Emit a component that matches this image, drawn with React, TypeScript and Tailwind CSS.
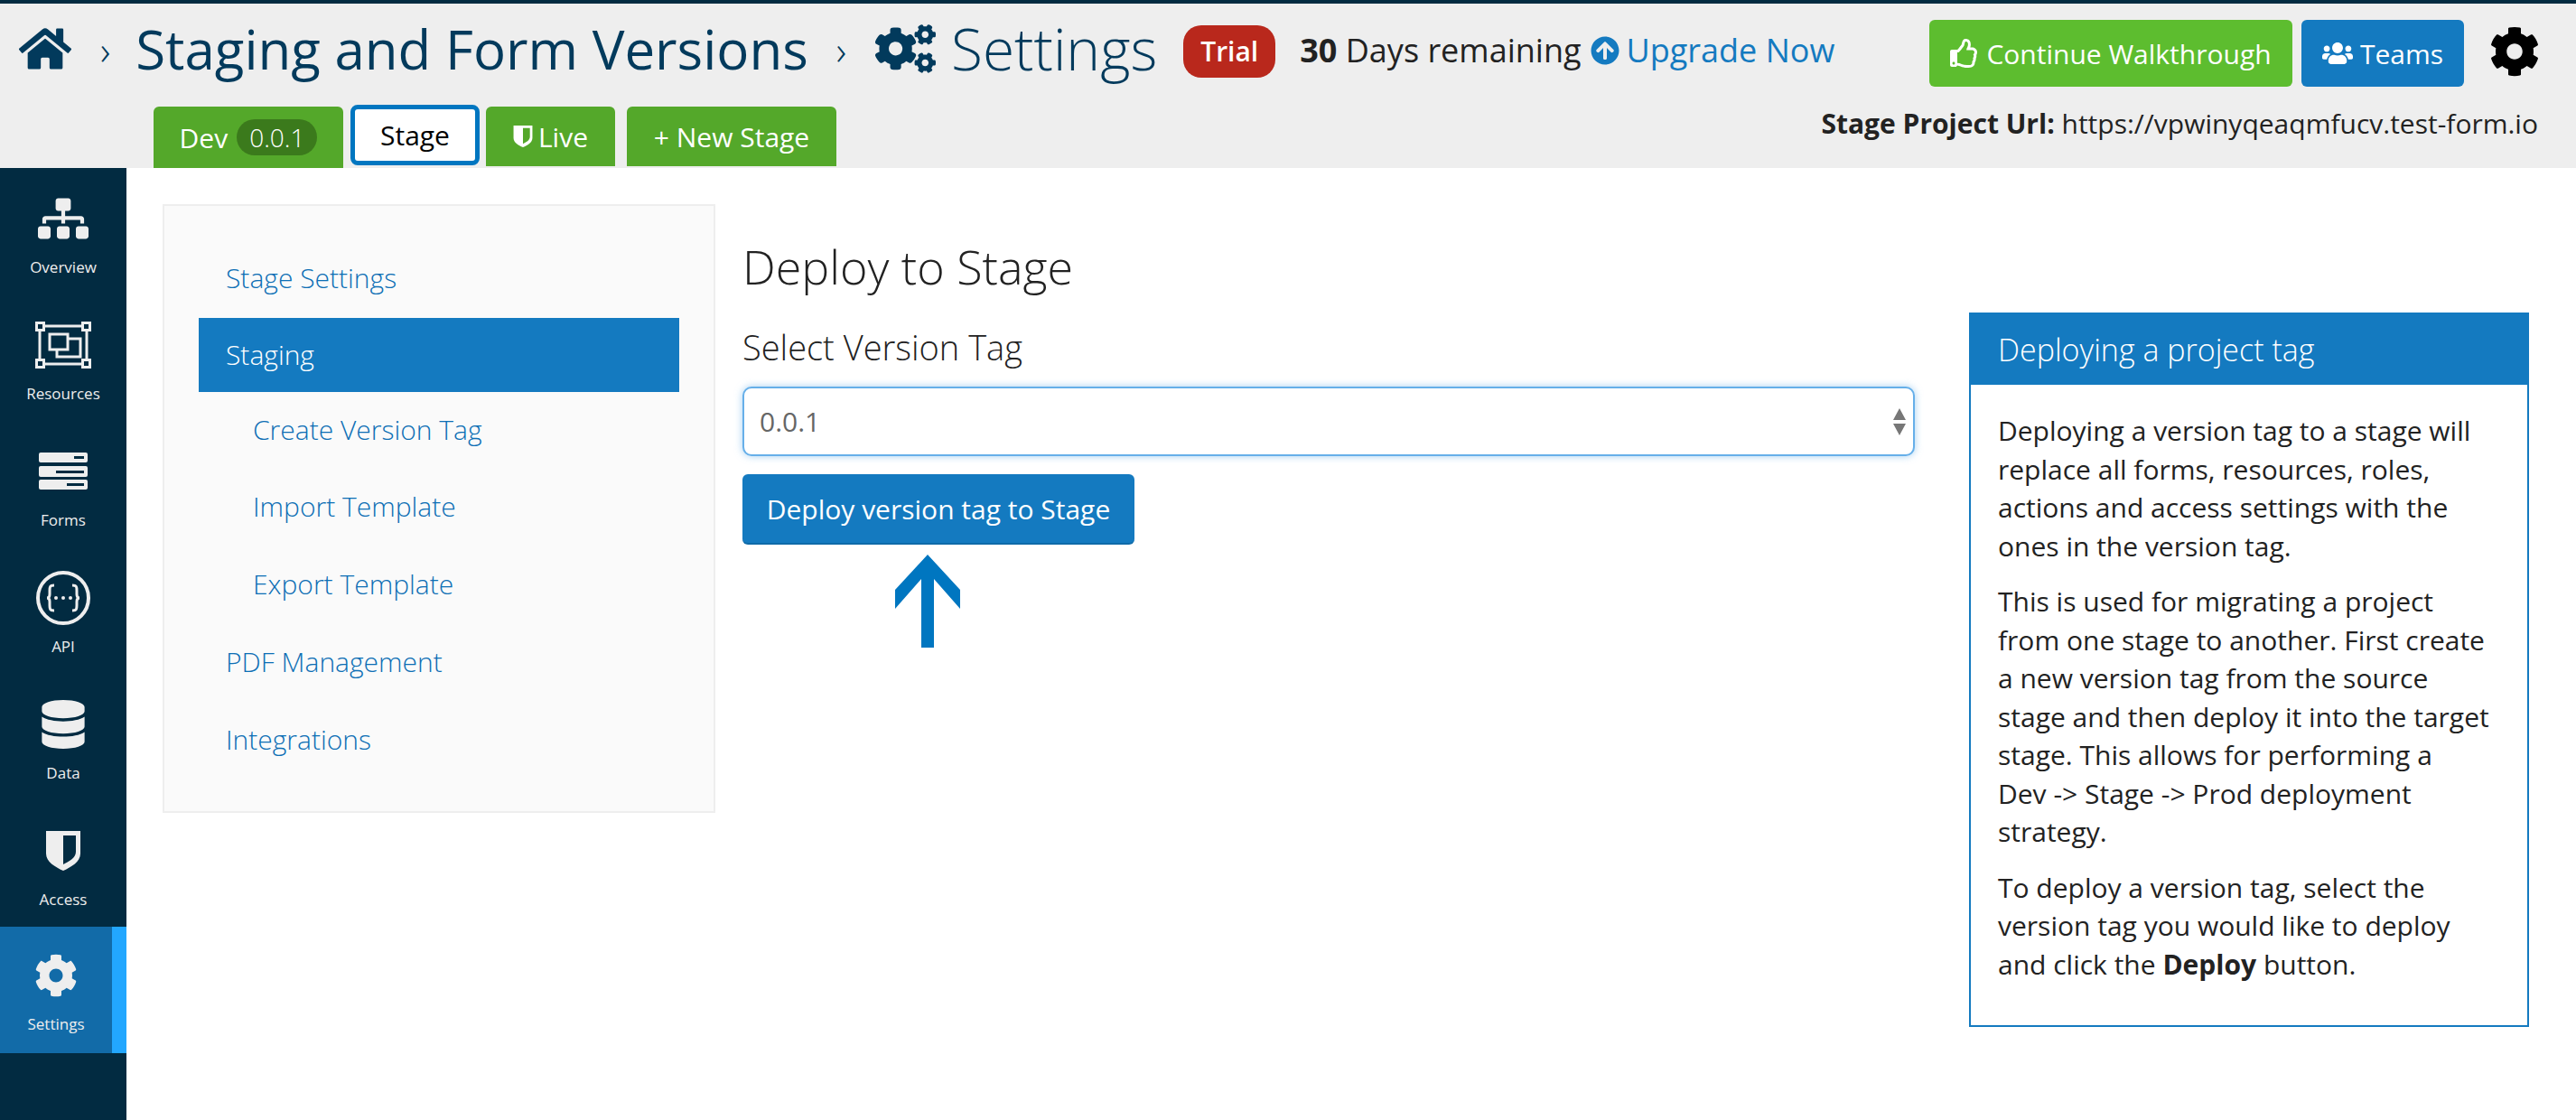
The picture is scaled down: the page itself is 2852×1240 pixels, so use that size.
import React from "react";
import { FaHome, FaCogs, FaCog, FaUsers, FaRegThumbsUp, FaArrowCircleUp, FaSitemap, FaDatabase } from "react-icons/fa";

const Shield = ({ className }: { className?: string }) => (
  <svg viewBox="0 0 40 46" className={className} fill="currentColor">
    <path fillRule="evenodd" d="M1 1h38v25c0 9-10 15-19 19C11 41 1 35 1 26V1zM20 6v32c6-3 14-7 14-14V6H20z" />
  </svg>
);

const ResourcesIcon = () => (
  <svg viewBox="0 0 62 52" className="w-[62px] h-[52px]" fill="none" stroke="#eeeeee" strokeWidth="3">
    <path d="M9 5h44M9 47h44M5 9v34M57 9v34" />
    <rect x="1.5" y="1.5" width="8" height="8" strokeWidth="3" />
    <rect x="52.5" y="1.5" width="8" height="8" strokeWidth="3" />
    <rect x="1.5" y="42.5" width="8" height="8" strokeWidth="3" />
    <rect x="52.5" y="42.5" width="8" height="8" strokeWidth="3" />
    <rect x="16" y="14" width="20" height="17" />
    <path d="M36 19h14v20H24v-8" />
  </svg>
);

const FormsIcon = () => (
  <svg viewBox="0 0 54 42" className="w-[54px] h-[42px]">
    <rect x="0" y="0" width="54" height="11" rx="2" fill="#eeeeee" />
    <rect x="0" y="15" width="54" height="12" rx="2" fill="#eeeeee" />
    <rect x="0" y="30" width="54" height="11" rx="2" fill="#eeeeee" />
    <rect x="39" y="4" width="11" height="3" fill="#022b41" />
    <rect x="19" y="20" width="31" height="3" fill="#022b41" />
    <rect x="31" y="34" width="19" height="3" fill="#022b41" />
  </svg>
);

const ApiIcon = () => (
  <svg viewBox="0 0 60 60" className="w-[60px] h-[60px]" fill="none" stroke="#eeeeee">
    <circle cx="30" cy="30" r="28" strokeWidth="4" />
    <path d="M20 16c-5 0-5 2-5 6v4c0 3-1 4-3 4 2 0 3 1 3 4v4c0 4 0 6 5 6M40 16c5 0 5 2 5 6v4c0 3 1 4 3 4-2 0-3 1-3 4v4c0 4 0 6-5 6" strokeWidth="3" />
    <circle cx="22" cy="30" r="2" fill="#eeeeee" stroke="none" />
    <circle cx="30" cy="30" r="2" fill="#eeeeee" stroke="none" />
    <circle cx="38" cy="30" r="2" fill="#eeeeee" stroke="none" />
  </svg>
);

const SideItem = ({ icon, label, active }: { icon: React.ReactNode; label: string; active?: boolean }) => (
  <div className={active ? "h-[140px] -mt-[26px] flex bg-[#126ba8]" : "h-[140px] flex"}>
    <div className={active ? "w-[124px] flex flex-col items-center pt-[24px]" : "w-[140px] flex flex-col items-center"}>
      <div className="h-[60px] flex items-center justify-center">{icon}</div>
      <div className="mt-[12px] text-[17px] leading-[24px] text-[#eeeeee] font-medium">{label}</div>
    </div>
    {active && <div className="w-[16px] bg-[#22a7ff]" />}
  </div>
);

export default function App() {
  return (
    <div className="w-[2852px] h-[1240px] overflow-hidden bg-white flex flex-col font-['Open_Sans',sans-serif] text-[#222222]">
      <div className="h-[4px] bg-[#022b41]" />
      <header className="h-[182px] bg-[#eeeeee] flex flex-col">
        <div className="h-[112px] flex items-start pl-[21px] pr-[40px] pt-[13px]">
          <FaHome className="w-[58px] h-[52px] mt-[11px] text-[#023a5c]" />
          <span className="ml-[32px] mt-[12px] text-[44px] leading-[52px] text-[#023a5c] font-light">›</span>
          <h1 className="ml-[28px] text-[60px] leading-[74px] text-[#023a5c] font-normal whitespace-nowrap">Staging and Form Versions</h1>
          <span className="ml-[31px] mt-[12px] text-[44px] leading-[52px] text-[#023a5c] font-light">›</span>
          <FaCogs className="ml-[32px] mt-[7px] w-[67px] h-[60px] text-[#023a5c]" />
          <h2 className="ml-[17px] text-[64px] leading-[74px] text-[#023a5c] font-light whitespace-nowrap">Settings</h2>
          <span className="ml-[29px] mt-[11px] w-[102px] h-[58px] rounded-[20px] bg-[#b9281c] text-white text-[30px] leading-[58px] text-center font-semibold">Trial</span>
          <span className="ml-[27px] mt-[14px] text-[36px] leading-[50px] whitespace-nowrap"><b>30</b> Days remaining</span>
          <span className="ml-[10px] mt-[14px] flex items-center text-[36px] leading-[50px] text-[#147ac0] whitespace-nowrap">
            <FaArrowCircleUp className="w-[32px] h-[32px] mr-[8px]" />Upgrade Now
          </span>
          <div className="flex-1" />
          <button className="w-[402px] h-[74px] mt-[5px] rounded-[6px] bg-[#5dbd2f] text-white text-[30px] flex items-center justify-center gap-[8px]"><FaRegThumbsUp className="w-[32px] h-[32px]" />Continue Walkthrough</button>
          <button className="ml-[10px] mt-[5px] w-[180px] h-[74px] rounded-[6px] bg-[#147ac0] text-white text-[30px] flex items-center justify-center gap-[8px]"><FaUsers className="w-[34px] h-[34px]" />Teams</button>
          <FaCog className="ml-[28px] mt-[12px] w-[56px] h-[56px] text-black" />
        </div>
        <div className="h-[70px] flex items-end pl-[170px] pr-[42px]">
          <div className="w-[210px] h-[68px] rounded-t-[6px] bg-[#54a82a] text-white text-[30px] flex items-center justify-center gap-[10px]">Dev<span className="px-[14px] h-[40px] rounded-[20px] bg-[#3b7a1c] text-[28px] leading-[40px] font-light">0.0.1</span></div>
          <div className="ml-[8px] w-[143px] h-[67px] mb-[3px] rounded-[8px] border-[5px] border-[#0076c0] bg-white text-black text-[30px] flex items-center justify-center">Stage</div>
          <div className="ml-[7px] w-[143px] h-[66px] mb-[2px] rounded-t-[6px] bg-[#54a82a] text-white text-[30px] flex items-center justify-center gap-[6px]"><Shield className="w-[22px] h-[28px]" />Live</div>
          <div className="ml-[13px] w-[232px] h-[66px] mb-[2px] rounded-t-[6px] bg-[#54a82a] text-white text-[30px] flex items-center justify-center">+ New Stage</div>
          <div className="flex-1" />
          <div className="h-[70px] text-[30px] leading-[42px] whitespace-nowrap"><b>Stage Project Url:</b> https://vpwinyqeaqmfucv.test-form.io</div>
        </div>
      </header>
      <div className="flex-1 flex">
        <aside className="w-[140px] bg-[#022b41] flex flex-col pt-[26px]">
          <SideItem icon={<FaSitemap className="w-[56px] h-[46px] text-[#eeeeee]" />} label="Overview" />
          <SideItem icon={<ResourcesIcon />} label="Resources" />
          <SideItem icon={<FormsIcon />} label="Forms" />
          <SideItem icon={<ApiIcon />} label="API" />
          <SideItem icon={<FaDatabase className="w-[48px] h-[54px] text-[#eeeeee]" />} label="Data" />
          <SideItem icon={<Shield className="w-[40px] h-[46px] text-[#eeeeee]" />} label="Access" />
          <SideItem active icon={<FaCog className="w-[48px] h-[48px] text-[#eeeeee]" />} label="Settings" />
        </aside>
        <main className="flex-1 flex items-start pl-[40px] pr-[52px] pt-[40px]">
          <nav className="w-[612px] h-[674px] border-2 border-[#eeeeee] bg-[#fafafa] pt-[38px] px-[38px] text-[30px] font-light text-[#0d6fb5] shrink-0">
            <div className="h-[86px] leading-[84px] pl-[30px]">Stage Settings</div>
            <div className="h-[82px] leading-[82px] pl-[30px] bg-[#147ac0] text-white">Staging</div>
            <div className="h-[84px] leading-[84px] pl-[60px]">Create Version Tag</div>
            <div className="h-[86px] leading-[86px] pl-[60px]">Import Template</div>
            <div className="h-[86px] leading-[86px] pl-[60px]">Export Template</div>
            <div className="h-[86px] leading-[86px] pl-[30px]">PDF Management</div>
            <div className="h-[86px] leading-[86px] pl-[30px]">Integrations</div>
          </nav>
          <section className="relative ml-[30px] w-[1298px] shrink-0">
            <h3 className="mt-[38px] text-[52px] leading-[62px] font-light">Deploy to Stage</h3>
            <label className="block mt-[33px] text-[38px] leading-[50px] font-light">Select Version Tag</label>
            <div className="mt-[19px] h-[77px] rounded-[10px] border-2 border-[#66afe9] shadow-[0_0_8px_rgba(102,175,233,0.6)] bg-white flex items-center justify-between pl-[17px] pr-[8px] text-[30px] text-[#666666]">
              <span>0.0.1</span>
              <svg viewBox="0 0 14 30" className="w-[14px] h-[30px]" fill="#777777"><path d="M7 0l7 13H0zM0 17h14L7 30z" /></svg>
            </div>
            <button className="mt-[20px] block w-[434px] h-[78px] rounded-[6px] bg-[#147ac0] border-b-2 border-[#0f6aa8] text-white text-[30px] font-medium">Deploy version tag to Stage</button>
            <svg viewBox="0 0 72 103" className="absolute left-[169px] top-[388px] w-[72px] h-[103px]" fill="#0076c0"><path d="M36 0L72 39v21L43 27v76H29V27L0 60V39z" /></svg>
          </section>
          <aside className="ml-[60px] mt-[120px] w-[620px] h-[791px] border-2 border-[#147ac0] shrink-0">
            <div className="h-[78px] bg-[#147ac0] text-white text-[34px] leading-[78px] pl-[30px] font-light">Deploying a project tag</div>
            <div className="pt-[30px] pl-[30px] pr-[38px] text-[30px] leading-[42.5px]">
              <p>Deploying a version tag to a stage will replace all forms, resources, roles, actions and access settings with the ones in the version tag.</p>
              <p className="mt-[19px]">This is used for migrating a project from one stage to another. First create a new version tag from the source stage and then deploy it into the target stage. This allows for performing a<br />Dev -&gt; Stage -&gt; Prod deployment strategy.</p>
              <p className="mt-[19px]">To deploy a version tag, select the version tag you would like to deploy and click the <b>Deploy</b> button.</p>
            </div>
          </aside>
        </main>
      </div>
    </div>
  );
}
